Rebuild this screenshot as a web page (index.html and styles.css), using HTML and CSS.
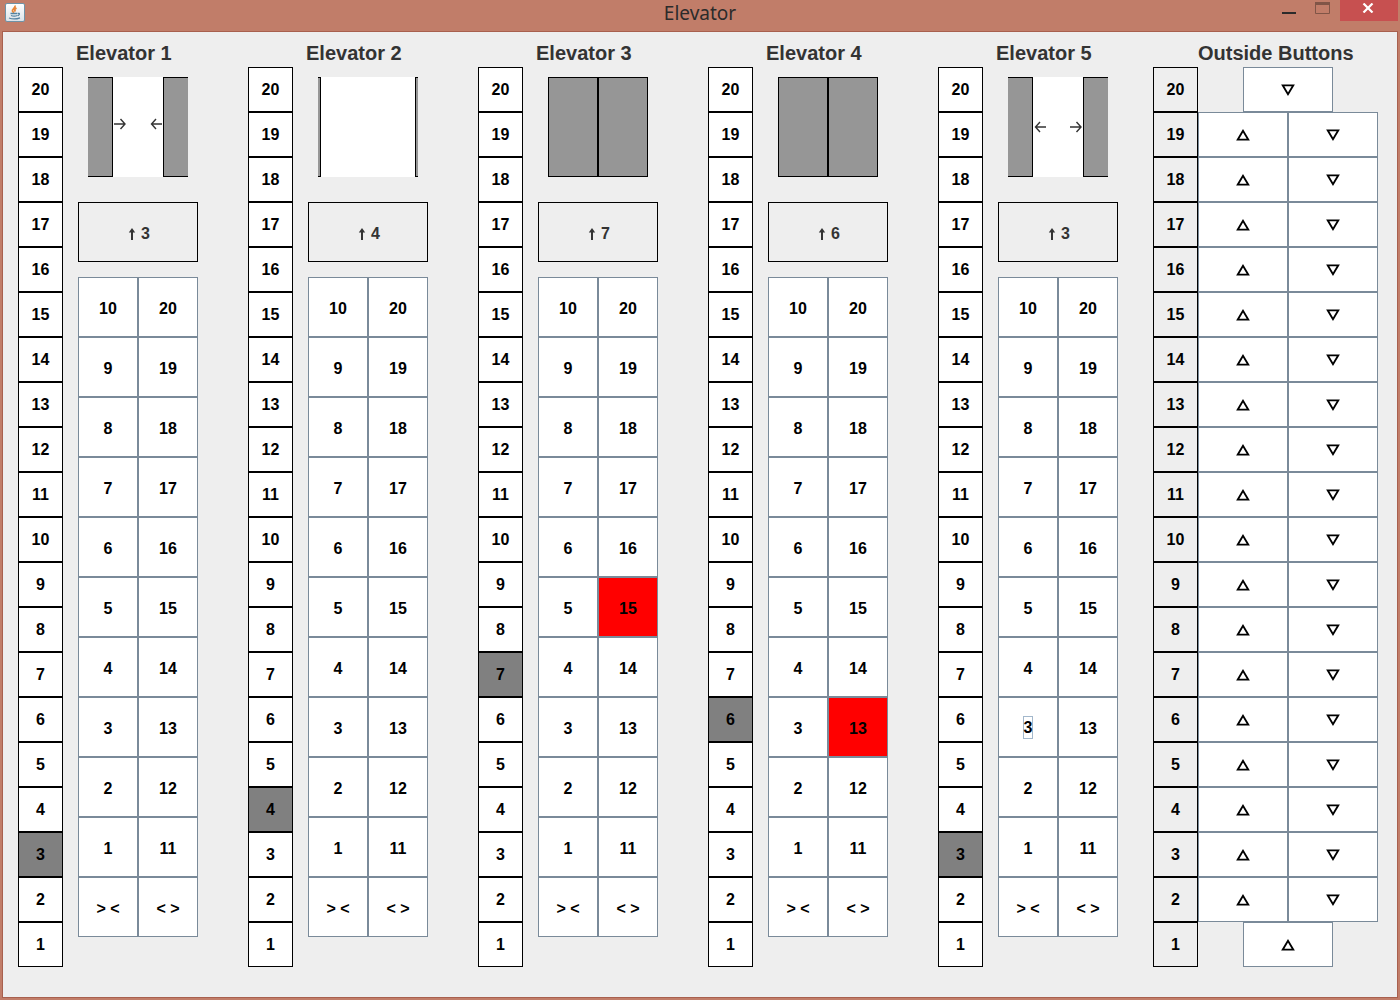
FILE: index.html
```html
<!DOCTYPE html>
<html lang="en">
<head>
<meta charset="utf-8">
<title>Elevator</title>
<link rel="stylesheet" href="styles.css">
</head>
<body>
<svg class="symbols" aria-hidden="true">
  <symbol id="up" viewBox="0 0 14 12"><path d="M7 1.8 1.700 10.700H12.300Z" fill="none" stroke="currentColor" stroke-width="1.8"/></symbol>
  <symbol id="down" viewBox="0 0 14 12"><path d="M7 10.200 1.700 1.300H12.300Z" fill="none" stroke="currentColor" stroke-width="1.8"/></symbol>
  <symbol id="rise" viewBox="0 0 8 12"><path d="M4 12V2" stroke="currentColor" stroke-width="2"/><path d="M4 0 .8 4.5H7.2Z" fill="currentColor"/></symbol>
  <symbol id="right" viewBox="0 0 12 12"><path d="M0 6H11M6.5 1 11 6 6.5 11" fill="none" stroke="currentColor" stroke-width="1.4"/></symbol>
  <symbol id="left" viewBox="0 0 12 12"><path d="M12 6H2M6 1 1.5 6 6 11" fill="none" stroke="currentColor" stroke-width="1.4"/></symbol>
</svg>
<div class="window">
  <header class="titlebar">
    <svg class="app-icon" viewBox="0 0 20 19" aria-hidden="true">
      <defs><linearGradient id="tile" x1="0" y1="0" x2="0" y2="1"><stop offset="0" stop-color="#fff"/><stop offset="1" stop-color="#dbe2e8"/></linearGradient></defs>
      <rect x=".5" y=".5" width="19" height="18" rx="1.5" fill="url(#tile)" stroke="#6f92a6"/>
      <path d="M10 2.5C11 5 6.500 6.200 7.500 8.200Q8 9.200 9 9.800M11.500 5C9 6.500 9.500 7.500 10.500 8.500" fill="none" stroke="#e8873a" stroke-width="1.800"/>
      <path d="M5.500 10.500H12.500M6 12.500Q9 13.800 12.500 12.500M13 10.300Q15.800 10.200 13 12.800M4 15Q9.500 17 15 14.800" fill="none" stroke="#5382a1" stroke-width="1.300"/>
    </svg>
    <h1 class="title">Elevator</h1>
    <div class="controls">
      <button class="control" aria-label="Minimize"><svg width="14" height="14" viewBox="0 0 14 14"><path d="M0 13H14" stroke="#2b2b2b" stroke-width="2"/></svg></button>
      <button class="control" aria-label="Maximize"><svg width="15" height="14" viewBox="0 0 15 14"><path d="M.5 2V13.500H14.500V2" fill="none" stroke="#805547"/><path d="M0 3.500H15" stroke="#805547" stroke-width="3"/></svg></button>
      <button class="control control-close" aria-label="Close"><svg width="12" height="10" viewBox="0 0 12 10"><path d="M1.500 .5 10.500 9.500M10.500 .5 1.500 9.500" stroke="#fff" stroke-width="2.200"/></svg></button>
    </div>
  </header>

  <main class="content">
    <div class="elevators">

      <section class="elevator">
        <h2 class="heading">Elevator 1</h2>
        <div class="unit">
          <ol class="shaft">
            <li>20</li><li>19</li><li>18</li><li>17</li><li>16</li><li>15</li><li>14</li><li>13</li><li>12</li><li>11</li>
            <li>10</li><li>9</li><li>8</li><li>7</li><li>6</li><li>5</li><li>4</li><li class="current">3</li><li>2</li><li>1</li>
          </ol>
          <div class="cabin">
            <div class="doors half closing">
              <div class="door"></div><svg class="arrow"><use href="#right"/></svg>
              <svg class="arrow"><use href="#left"/></svg><div class="door"></div>
            </div>
            <div class="status"><svg class="rise"><use href="#rise"/></svg>3</div>
            <div class="keypad">
              <button>10</button><button>20</button>
              <button>9</button><button>19</button>
              <button>8</button><button>18</button>
              <button>7</button><button>17</button>
              <button>6</button><button>16</button>
              <button>5</button><button>15</button>
              <button>4</button><button>14</button>
              <button>3</button><button>13</button>
              <button>2</button><button>12</button>
              <button>1</button><button>11</button>
              <button>&gt; &lt;</button><button>&lt; &gt;</button>
            </div>
          </div>
        </div>
      </section>

      <section class="elevator">
        <h2 class="heading">Elevator 2</h2>
        <div class="unit">
          <ol class="shaft">
            <li>20</li><li>19</li><li>18</li><li>17</li><li>16</li><li>15</li><li>14</li><li>13</li><li>12</li><li>11</li>
            <li>10</li><li>9</li><li>8</li><li>7</li><li>6</li><li>5</li><li class="current">4</li><li>3</li><li>2</li><li>1</li>
          </ol>
          <div class="cabin">
            <div class="doors open"><div class="door"></div><div class="door"></div></div>
            <div class="status"><svg class="rise"><use href="#rise"/></svg>4</div>
            <div class="keypad">
              <button>10</button><button>20</button>
              <button>9</button><button>19</button>
              <button>8</button><button>18</button>
              <button>7</button><button>17</button>
              <button>6</button><button>16</button>
              <button>5</button><button>15</button>
              <button>4</button><button>14</button>
              <button>3</button><button>13</button>
              <button>2</button><button>12</button>
              <button>1</button><button>11</button>
              <button>&gt; &lt;</button><button>&lt; &gt;</button>
            </div>
          </div>
        </div>
      </section>

      <section class="elevator">
        <h2 class="heading">Elevator 3</h2>
        <div class="unit">
          <ol class="shaft">
            <li>20</li><li>19</li><li>18</li><li>17</li><li>16</li><li>15</li><li>14</li><li>13</li><li>12</li><li>11</li>
            <li>10</li><li>9</li><li>8</li><li class="current">7</li><li>6</li><li>5</li><li>4</li><li>3</li><li>2</li><li>1</li>
          </ol>
          <div class="cabin">
            <div class="doors closed"><div class="door"></div><div class="door"></div></div>
            <div class="status"><svg class="rise"><use href="#rise"/></svg>7</div>
            <div class="keypad">
              <button>10</button><button>20</button>
              <button>9</button><button>19</button>
              <button>8</button><button>18</button>
              <button>7</button><button>17</button>
              <button>6</button><button>16</button>
              <button>5</button><button class="pressed">15</button>
              <button>4</button><button>14</button>
              <button>3</button><button>13</button>
              <button>2</button><button>12</button>
              <button>1</button><button>11</button>
              <button>&gt; &lt;</button><button>&lt; &gt;</button>
            </div>
          </div>
        </div>
      </section>

      <section class="elevator">
        <h2 class="heading">Elevator 4</h2>
        <div class="unit">
          <ol class="shaft">
            <li>20</li><li>19</li><li>18</li><li>17</li><li>16</li><li>15</li><li>14</li><li>13</li><li>12</li><li>11</li>
            <li>10</li><li>9</li><li>8</li><li>7</li><li class="current">6</li><li>5</li><li>4</li><li>3</li><li>2</li><li>1</li>
          </ol>
          <div class="cabin">
            <div class="doors closed"><div class="door"></div><div class="door"></div></div>
            <div class="status"><svg class="rise"><use href="#rise"/></svg>6</div>
            <div class="keypad">
              <button>10</button><button>20</button>
              <button>9</button><button>19</button>
              <button>8</button><button>18</button>
              <button>7</button><button>17</button>
              <button>6</button><button>16</button>
              <button>5</button><button>15</button>
              <button>4</button><button>14</button>
              <button>3</button><button class="pressed">13</button>
              <button>2</button><button>12</button>
              <button>1</button><button>11</button>
              <button>&gt; &lt;</button><button>&lt; &gt;</button>
            </div>
          </div>
        </div>
      </section>

      <section class="elevator">
        <h2 class="heading">Elevator 5</h2>
        <div class="unit">
          <ol class="shaft">
            <li>20</li><li>19</li><li>18</li><li>17</li><li>16</li><li>15</li><li>14</li><li>13</li><li>12</li><li>11</li>
            <li>10</li><li>9</li><li>8</li><li>7</li><li>6</li><li>5</li><li>4</li><li class="current">3</li><li>2</li><li>1</li>
          </ol>
          <div class="cabin">
            <div class="doors half">
              <div class="door"></div><svg class="arrow"><use href="#left"/></svg>
              <svg class="arrow"><use href="#right"/></svg><div class="door"></div>
            </div>
            <div class="status"><svg class="rise"><use href="#rise"/></svg>3</div>
            <div class="keypad">
              <button>10</button><button>20</button>
              <button>9</button><button>19</button>
              <button>8</button><button>18</button>
              <button>7</button><button>17</button>
              <button>6</button><button>16</button>
              <button>5</button><button>15</button>
              <button>4</button><button>14</button>
              <button><span class="focus">3</span></button><button>13</button>
              <button>2</button><button>12</button>
              <button>1</button><button>11</button>
              <button>&gt; &lt;</button><button>&lt; &gt;</button>
            </div>
          </div>
        </div>
      </section>
    </div>

    <section class="outside">
      <h2 class="heading outside-heading">Outside Buttons</h2>
      <div class="landing">
        <ol class="shaft plain">
          <li>20</li><li>19</li><li>18</li><li>17</li><li>16</li><li>15</li><li>14</li><li>13</li><li>12</li><li>11</li>
          <li>10</li><li>9</li><li>8</li><li>7</li><li>6</li><li>5</li><li>4</li><li>3</li><li>2</li><li>1</li>
        </ol>
        <div class="calls">
          <button class="single" aria-label="20 down"><svg><use href="#down"/></svg></button>
          <button aria-label="19 up"><svg><use href="#up"/></svg></button><button aria-label="19 down"><svg><use href="#down"/></svg></button>
          <button aria-label="18 up"><svg><use href="#up"/></svg></button><button aria-label="18 down"><svg><use href="#down"/></svg></button>
          <button aria-label="17 up"><svg><use href="#up"/></svg></button><button aria-label="17 down"><svg><use href="#down"/></svg></button>
          <button aria-label="16 up"><svg><use href="#up"/></svg></button><button aria-label="16 down"><svg><use href="#down"/></svg></button>
          <button aria-label="15 up"><svg><use href="#up"/></svg></button><button aria-label="15 down"><svg><use href="#down"/></svg></button>
          <button aria-label="14 up"><svg><use href="#up"/></svg></button><button aria-label="14 down"><svg><use href="#down"/></svg></button>
          <button aria-label="13 up"><svg><use href="#up"/></svg></button><button aria-label="13 down"><svg><use href="#down"/></svg></button>
          <button aria-label="12 up"><svg><use href="#up"/></svg></button><button aria-label="12 down"><svg><use href="#down"/></svg></button>
          <button aria-label="11 up"><svg><use href="#up"/></svg></button><button aria-label="11 down"><svg><use href="#down"/></svg></button>
          <button aria-label="10 up"><svg><use href="#up"/></svg></button><button aria-label="10 down"><svg><use href="#down"/></svg></button>
          <button aria-label="9 up"><svg><use href="#up"/></svg></button><button aria-label="9 down"><svg><use href="#down"/></svg></button>
          <button aria-label="8 up"><svg><use href="#up"/></svg></button><button aria-label="8 down"><svg><use href="#down"/></svg></button>
          <button aria-label="7 up"><svg><use href="#up"/></svg></button><button aria-label="7 down"><svg><use href="#down"/></svg></button>
          <button aria-label="6 up"><svg><use href="#up"/></svg></button><button aria-label="6 down"><svg><use href="#down"/></svg></button>
          <button aria-label="5 up"><svg><use href="#up"/></svg></button><button aria-label="5 down"><svg><use href="#down"/></svg></button>
          <button aria-label="4 up"><svg><use href="#up"/></svg></button><button aria-label="4 down"><svg><use href="#down"/></svg></button>
          <button aria-label="3 up"><svg><use href="#up"/></svg></button><button aria-label="3 down"><svg><use href="#down"/></svg></button>
          <button aria-label="2 up"><svg><use href="#up"/></svg></button><button aria-label="2 down"><svg><use href="#down"/></svg></button>
          <button class="single" aria-label="1 up"><svg><use href="#up"/></svg></button>
        </div>
      </div>
    </section>
  </main>
</div>
</body>
</html>
```
FILE: styles.css
```css
* { box-sizing: border-box; }

body {
  margin: 0;
  font: bold 16px/20px "Liberation Sans", Arial, sans-serif;
  color: #333;
}

button {
  margin: 0;
  padding: 0;
  border: 0;
  background: none;
  font: inherit;
  color: #000;
}

svg { display: block; }

.symbols { display: none; }

/* Window frame */
.window {
  display: flex;
  flex-direction: column;
  min-height: 100vh;
  padding: 0 2px 2px;
  background: #c17d69;
}

.titlebar {
  display: grid;
  grid-template-columns: 1fr auto 1fr;
  align-items: start;
  height: 31px;
}

.app-icon {
  width: 20px;
  height: 19px;
  margin: 3px;
}

.title {
  margin: 0;
  font: 19px/26px "Noto Sans", sans-serif;
  color: #2b2b2b;
}

.controls {
  display: flex;
  align-items: flex-start;
  justify-content: flex-end;
}

.control { padding: 0 10px 0 9px; }

.control-close {
  display: flex;
  justify-content: center;
  width: 58px;
  height: 21px;
  padding: 3px 2px 0 0;
  background: #c75050;
}

/* Panel */
.content {
  flex: 1;
  display: flex;
  gap: 35px;
  padding: 9px 19px 30px 15px;
  border: 1px solid #a8604e;
  background: #eee;
}

.elevators {
  flex: 1;
  display: flex;
  justify-content: space-between;
}

.heading {
  margin: 0 0 2px;
  padding-left: 58px;
  font-size: 20px;
  line-height: 24px;
  white-space: nowrap;
}

.outside-heading { padding-left: 45px; }

.elevator { width: 180px; }

.unit {
  display: flex;
  gap: 15px;
}

.shaft {
  width: 45px;
  margin: 0;
  padding: 0;
  list-style: none;
  color: #000;
}

.shaft li {
  display: grid;
  place-items: center;
  height: 45px;
  padding-top: 1px;
  border: 1px solid #000;
  background: #fff;
}

.shaft .current { background: #808080; }

.plain li { background: #eee; }

.cabin { width: 120px; }

/* Doors */
.doors {
  display: flex;
  align-items: center;
  justify-content: space-between;
  height: 100px;
  margin: 10px 10px 25px;
  background: #fff;
}

.door {
  width: 50px;
  height: 100px;
  border: 1px solid #000;
  background: #969696;
}

.half .door { width: 25px; }
.open .door { width: 3px; }

.half .door:first-child,
.open .door:first-child { border-left: 0; }

.half .door:last-child,
.open .door:last-child { border-right: 0; }

.arrow {
  width: 12px;
  height: 12px;
  margin: 0 auto 0 1px;
}

.arrow + .arrow { margin: 0 1px 0 auto; }

.closing .arrow { margin-bottom: 6px; }

.status {
  display: flex;
  align-items: center;
  justify-content: center;
  gap: 5px;
  height: 60px;
  margin-bottom: 15px;
  padding: 3px 0 0 2px;
  border: 1px solid #000;
}

.rise {
  width: 8px;
  height: 12px;
}

.keypad {
  display: grid;
  grid-template-columns: 1fr 1fr;
  grid-auto-rows: 60px;
}

.keypad button,
.calls button {
  display: grid;
  place-items: center;
  padding-top: 1px;
  border: 1px solid #7a8a99;
  background: #fff;
}

.keypad button { padding-top: 3px; }

.keypad .pressed { background: #f00; }

.focus {
  margin-bottom: 3px;
  border: 1px solid #a3b8cc;
  line-height: 21px;
}

/* Landing buttons */
.landing { display: flex; }

.calls {
  display: grid;
  grid-template-columns: repeat(4, 45px);
  grid-auto-rows: 45px;
}

.calls button { grid-column: span 2; }
.calls .single { grid-column: 2 / 4; }

.calls svg {
  width: 14px;
  height: 12px;
}
```
